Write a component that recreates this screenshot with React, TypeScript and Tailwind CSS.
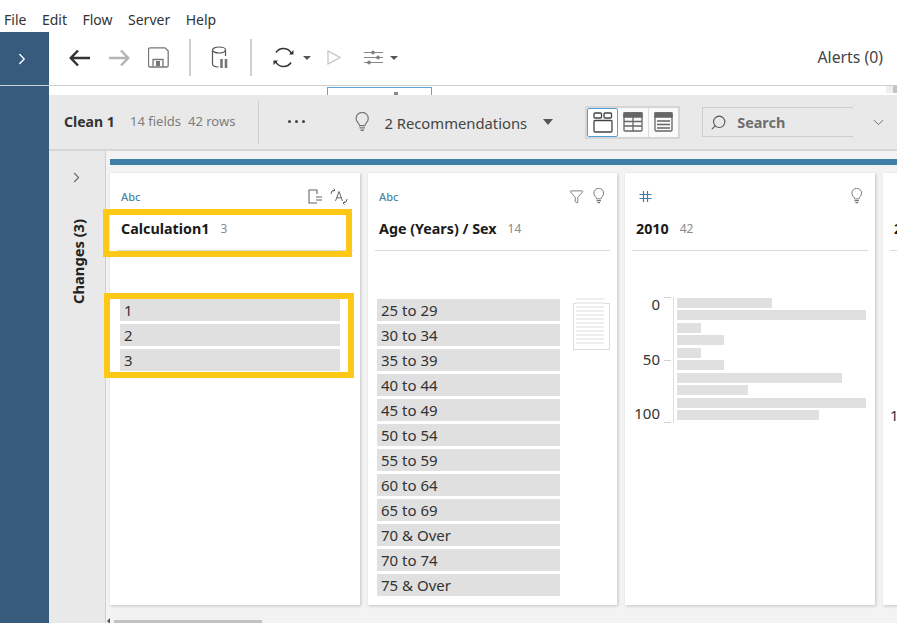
import { ChevronDown, ChevronRight, Filter, Search } from "lucide-react";

const ages = ["25 to 29", "30 to 34", "35 to 39", "40 to 44", "45 to 49", "50 to 54", "55 to 59", "60 to 64", "65 to 69", "70 & Over", "70 to 74", "75 & Over"];

const bars = [
  { w: 95, mt: 0 },
  { w: 189, mt: 2 },
  { w: 24, mt: 3 },
  { w: 47, mt: 2 },
  { w: 24, mt: 3 },
  { w: 47, mt: 2 },
  { w: 165, mt: 3 },
  { w: 71, mt: 2 },
  { w: 189, mt: 3 },
  { w: 142, mt: 2 },
];

const Caret = ({ className = "" }: { className?: string }) => (
  <span className={`w-0 h-0 border-x-[4px] border-x-transparent border-t-[4px] border-t-[#555] ${className}`} />
);

const Bulb = ({ size = 16, color = "#777" }: { size?: number; color?: string }) => (
  <svg width={size * 0.72} height={size} viewBox="0 0 13 18" fill="none" stroke={color} strokeWidth="1.1">
    <path d="M4 12.2c0-2-3-3-3-6.4a5.5 5.5 0 0 1 11 0c0 3.400-3 4.400-3 6.400z" />
    <path d="M4 14.300h5M5 16.400h3" strokeWidth="1.300" />
  </svg>
);

const TypeTag = ({ hash }: { hash?: boolean }) =>
  hash ? (
    <svg className="ml-[3px]" width="13" height="13" viewBox="0 0 13 13" stroke="#3f7fa6" strokeWidth="1.200" fill="none">
      <path d="M4.500 1v11M8.500 1v11M.5 4.500h12M.5 8.500h12" />
    </svg>
  ) : (
    <span className="text-[11px] leading-none font-medium text-[#4d87a8]">Abc</span>
  );

const CardHead = ({
  name,
  count,
  hash,
  icons,
}: {
  name: string;
  count: string;
  hash?: boolean;
  icons: React.ReactNode;
}) => (
  <div className="mx-[7px] h-[78px] border-b border-[#d9d9d9] shrink-0">
    <div className="h-[47px] pl-[4px] pr-[5px] flex items-start justify-between pt-[14px]">
      <div className="h-[18px] flex items-center"><TypeTag hash={hash} /></div>
      <div className="flex items-center gap-[8px] h-[18px]">{icons}</div>
    </div>
    <div className="pl-[4px] flex items-center gap-[11px] h-[18px]">
      <span className="text-[14.3px] font-bold text-[#1a1a1a] leading-none">{name}</span>
      <span className="text-[12px] text-[#8a8a8a] leading-none">{count}</span>
    </div>
  </div>
);

const ValueRow = ({ label, w }: { label: string; w: string }) => (
  <div className={`${w} h-[22px] bg-[#e0e0e0] pl-[4px] flex items-center text-[15px] text-[#333] leading-none`}>{label}</div>
);

const App = () => {
  return (
    <div className="relative w-[897px] h-[623px] overflow-hidden bg-white flex flex-col font-['Noto_Sans',sans-serif] text-[#333]">
      {/* menu bar */}
      <div className="h-8 shrink-0 flex items-center gap-[15.5px] pl-[4px] pt-[6px] text-[14px] text-[#333]">
        <span>File</span>
        <span>Edit</span>
        <span>Flow</span>
        <span>Server</span>
        <span>Help</span>
      </div>

      <div className="flex flex-1 min-h-0">
        {/* blue rail */}
        <div className="w-[49px] shrink-0 bg-[#375b7c]">
          <div className="h-[54px] border-b border-[#c9d3dc] flex items-center justify-center pr-[6px]">
            <ChevronRight size={18} color="#fff" strokeWidth={1.800} />
          </div>
        </div>

        <div className="flex-1 min-w-0 flex flex-col">
          {/* toolbar */}
          <div className="h-[54px] shrink-0 border-b border-[#cfcfcf] flex items-center pl-[20px] pr-[14px] pb-[2px]">
            <svg width="21" height="18" viewBox="0 0 21 18" fill="none" stroke="#333" strokeWidth="2.500">
              <path d="M21 9H2M9 1.500 1.800 9 9 16.500" />
            </svg>
            <svg className="ml-[19px]" width="21" height="18" viewBox="0 0 21 18" fill="none" stroke="#b5b5b5" strokeWidth="2.500">
              <path d="M0 9h19M12 1.500 19.200 9 12 16.500" />
            </svg>
            <svg className="ml-[18px]" width="21" height="21" viewBox="0 0 21 21" fill="none" stroke="#777" strokeWidth="1.300">
              <path d="M2 .8h15l3.200 3.200v14.500a1.500 1.500 0 0 1-1.500 1.500H2a1.500 1.500 0 0 1-1.500-1.500V2.300A1.500 1.500 0 0 1 2 .8z" />
              <path d="M5 19.500v-7h10v7" />
              <rect x="8" y="14" width="4" height="5" fill="#777" stroke="none" />
            </svg>
            <div className="ml-[20px] w-[2px] h-[37px] bg-[#cfcfcf]" />
            <svg className="ml-[20px]" width="18" height="23" viewBox="0 0 18 23" fill="none" stroke="#555" strokeWidth="1.200">
              <ellipse cx="8" cy="4" rx="6.500" ry="3" />
              <path d="M1.500 4v14c0 1.500 2.500 2.800 6 3M14.500 4v6" />
              <path d="M10.500 13v9M15 13v9" stroke="#777" strokeWidth="2.600" />
            </svg>
            <div className="ml-[21px] w-[2px] h-[37px] bg-[#cfcfcf]" />
            <svg className="ml-[21px]" width="21" height="21" viewBox="0 0 21 21" fill="none" stroke="#333" strokeWidth="1.500">
              <path d="M18.500 6.500A9 9 0 0 0 3 5.500M2.500 14.500A9 9 0 0 0 18 15.500" />
              <path d="M16 7.500h4.500V3zM5 13.500H.5V18z" fill="#333" stroke="none" />
            </svg>
            <Caret className="ml-[9px]" />
            <svg className="ml-[16px]" width="14" height="15" viewBox="0 0 14 15" fill="none" stroke="#c4c4c4" strokeWidth="1.200">
              <path d="M1 1v13l12-6.500z" />
            </svg>
            <svg className="ml-[23px]" width="19" height="15" viewBox="0 0 19 15" fill="none" stroke="#888" strokeWidth="1">
              <path d="M0 2.500h19M0 7.500h19M0 12.500h19" />
              <circle cx="9" cy="2.500" r="1.500" fill="#777" />
              <circle cx="14" cy="7.500" r="1.500" fill="#777" />
              <circle cx="5" cy="12.500" r="1.500" fill="#777" />
            </svg>
            <Caret className="ml-[7px]" />
            <span className="ml-auto text-[15.8px] text-[#444]">Alerts (0)</span>
          </div>

          {/* open flow node peeking under the toolbar */}
          <div className="h-[9px] shrink-0 flex items-end justify-between">
            <div className="ml-[278px] w-[105px] h-[8px] border-x border-t border-[#5aa5dc] flex justify-end pr-[33px] items-end">
              <span className="w-[4px] h-[3px] bg-[#888]" />
            </div>
            <div className="w-[11px] h-[7px] mb-[2px] flex">
              <div className="w-[7px] bg-[#eeeeee]" />
              <div className="w-[4px] bg-[#c4c4c4]" />
            </div>
          </div>

          {/* step header */}
          <div className="h-[56px] shrink-0 bg-[#e9e9e9] border-b-2 border-[#d6d6d6] flex items-center pl-[15px]">
            <span className="text-[14px] font-bold text-[#333] w-[66px] -mt-[2px]">Clean 1</span>
            <span className="text-[13px] text-[#7d7d7d] w-[58px]">14 fields</span>
            <span className="text-[13px] text-[#7d7d7d] w-[70px]">42 rows</span>
            <div className="w-px h-[43px] bg-[#cfcfcf]" />
            <div className="ml-[29px] flex gap-[4px] -mt-[2px]">
              <span className="w-[3px] h-[3px] rounded-full bg-[#444]" />
              <span className="w-[3px] h-[3px] rounded-full bg-[#444]" />
              <span className="w-[3px] h-[3px] rounded-full bg-[#444]" />
            </div>
            <div className="ml-[50px] flex items-center"><Bulb size={20} /></div>
            <span className="ml-[15px] mt-[2px] text-[14.8px] text-[#444]">2 Recommendations</span>
            <span className="ml-[16px] w-0 h-0 border-x-[5px] border-x-transparent border-t-[6px] border-t-[#555]" />
            <div className="ml-[32px] w-[95px] h-[33px] border-2 border-[#d6d6d6] bg-[#fafafa] flex">
              <div className="w-[31px] h-full border border-[#4f9fd8] rounded-[2px] bg-white flex items-center justify-center">
                <svg width="20" height="21" viewBox="0 0 20 21" fill="none" stroke="#444" strokeWidth="1.300">
                  <rect x="1" y="1" width="7.500" height="5" rx="1" />
                  <rect x="11" y="1" width="7.500" height="5" rx="1" />
                  <rect x="1" y="8.500" width="18" height="11.500" rx="1" />
                </svg>
              </div>
              <div className="w-[31px] flex items-center justify-center border-r border-[#dcdcdc]">
                <svg width="20" height="20" viewBox="0 0 20 20" fill="none" stroke="#666" strokeWidth="1.300">
                  <rect x="1" y="1" width="18" height="18" rx="1" />
                  <path d="M1 1h18v4H1z" fill="#666" />
                  <path d="M1 9.500h18M1 14h18M10 5v14" />
                </svg>
              </div>
              <div className="flex-1 flex items-center justify-center">
                <svg width="19" height="20" viewBox="0 0 19 20" fill="none" stroke="#666" strokeWidth="1.300">
                  <rect x="1" y="1" width="17" height="18" rx="1" />
                  <path d="M1 1h17v4H1z" fill="#666" />
                  <path d="M3 9h13M3 12.500h13M3 16h13" />
                </svg>
              </div>
            </div>
            <div className="ml-[22px] w-[151px] h-[30px] border-y border-l border-[#cdcdcd] flex items-center pl-[7px]">
              <Search size={17} color="#555" strokeWidth={1.500} className="-scale-x-100" />
              <span className="ml-[10px] mt-[2px] text-[14.4px] font-bold text-[#6e6e6e]">Search</span>
            </div>
            <ChevronDown size={17} color="#666" strokeWidth={1.300} className="ml-[17px]" />
          </div>

          <div className="flex-1 min-h-0 flex">
            {/* changes pane */}
            <div className="w-[57px] shrink-0 bg-[#e9e9e9] border-r border-[#d0d0d0] flex flex-col items-center pr-[1px]">
              <ChevronRight size={17} color="#666" strokeWidth={1.500} className="mt-[18px]" />
              <span className="mt-[33px] rotate-180 [writing-mode:vertical-rl] text-[14.7px] font-bold text-[#222] leading-none ml-[4px]">
                Changes (3)
              </span>
            </div>

            {/* profile cards */}
            <div className="flex-1 min-w-0 bg-[#f3f3f3] flex flex-col pl-[4px] relative">
              <div className="h-[6px] mt-[8px] shrink-0 bg-[#3f7fa8]" />
              <div className="mt-[8px] h-[432px] flex gap-[8px]">
                <div className="w-[250px] shrink-0 bg-white shadow-[1px_1px_3px_rgba(0,0,0,0.2)] flex flex-col">
                  <CardHead
                    name="Calculation1"
                    count="3"
                    icons={
                      <>
                        <svg width="14" height="15" viewBox="0 0 14 15" fill="none" stroke="#666" strokeWidth="1.100">
                          <path d="M9 14H1V1h8v4M8 8h6M8 11h6" />
                        </svg>
                        <svg width="18" height="17" viewBox="0 0 18 17" fill="none" stroke="#666" strokeWidth="1">
                          <path d="M5.500 13 9 3.500 12.500 13M6.800 9.800h4.400" />
                          <path d="M1 6a4 4 0 0 1 4-4M5 2 3.500.5M5 2 3.500 3.500" />
                          <path d="M17 11a4 4 0 0 1-4 4M13 15l1.500-1.500M13 15l1.500 1.500" />
                        </svg>
                      </>
                    }
                  />
                  <div className="mt-[48px] ml-[10px] flex flex-col gap-[3px]">
                    <ValueRow label="1" w="w-[220px]" />
                    <ValueRow label="2" w="w-[220px]" />
                    <ValueRow label="3" w="w-[220px]" />
                  </div>
                </div>

                <div className="w-[249px] shrink-0 bg-white shadow-[1px_1px_3px_rgba(0,0,0,0.2)] flex flex-col">
                  <CardHead
                    name="Age (Years) / Sex"
                    count="14"
                    icons={
                      <>
                        <Filter size={15} color="#666" strokeWidth={1.300} className="-ml-[1px] mr-[1px]" />
                        <Bulb size={16} />
                      </>
                    }
                  />
                  <div className="mt-[48px] ml-[9px] flex items-start gap-[13px]">
                    <div className="flex flex-col gap-[3px]">
                      {ages.map((age) => (
                        <ValueRow key={age} label={age} w="w-[183px]" />
                      ))}
                    </div>
                    <div className="w-[37px] h-[47px] mt-[4px] border border-[#dcdcdc]">
                      <div className="-mt-[6px] ml-[2px] w-[28px] flex flex-col gap-[2px]">
                        {[0, 1, 2, 3, 4, 5, 6, 7, 8, 9, 10, 11].map((i) => (
                          <div key={i} className="h-[2px] bg-[#eeeeee]" />
                        ))}
                      </div>
                    </div>
                  </div>
                </div>

                <div className="w-[250px] shrink-0 bg-white shadow-[1px_1px_3px_rgba(0,0,0,0.2)] flex flex-col">
                  <CardHead name="2010" count="42" hash icons={<Bulb size={16} />} />
                  <div className="mt-[47px] ml-[7px] flex items-start">
                    <div className="w-[28px] h-[126px] flex flex-col justify-between items-end text-[15px] text-[#333] leading-none">
                      <span className="mt-[-1px]">0</span>
                      <span className="mt-[1px]">50</span>
                      <span className="mb-[3px]">100</span>
                    </div>
                    <div className="ml-[4px] w-[10px] h-[126px] border-r border-[#dcdcdc] flex flex-col justify-between items-start -mt-px">
                      <span className="w-[7px] h-px bg-[#cfcfcf]" />
                      <span className="w-[7px] h-px bg-[#cfcfcf]" />
                      <span className="w-[7px] h-px bg-[#cfcfcf]" />
                    </div>
                    <div className="ml-[3px] flex flex-col">
                      {bars.map((b, i) => (
                        <div key={i} className="h-[10px] bg-[#e0e0e0]" style={{ width: b.w, marginTop: b.mt }} />
                      ))}
                    </div>
                  </div>
                </div>

                <div className="w-[250px] shrink-0 bg-white shadow-[1px_1px_3px_rgba(0,0,0,0.2)] flex flex-col">
                  <CardHead name="2011" count="42" hash icons={null} />
                  <div className="mt-[157px] ml-[7px] text-[15px] leading-none">100</div>
                </div>
              </div>
              {/* horizontal scrollbar */}
              <div className="mt-auto -ml-[3px] flex items-end gap-[4px]">
                <span className="mb-[-1px] w-0 h-0 border-y-[3px] border-y-transparent border-r-[3px] border-r-[#555]" />
                <div className="w-[148px] h-[3px] bg-[#c2c2c2]" />
              </div>

              {/* yellow callouts drawn over the first card */}
              <div className="absolute left-[-3px] top-[58px] w-[249px] h-[48px] border-[6px] border-[#fdc916]" />
              <div className="absolute left-[-2px] top-[142px] w-[250px] h-[85px] border-[6px] border-[#fdc916]" />
            </div>
          </div>
        </div>
      </div>
    </div>
  );
};

export default App;
